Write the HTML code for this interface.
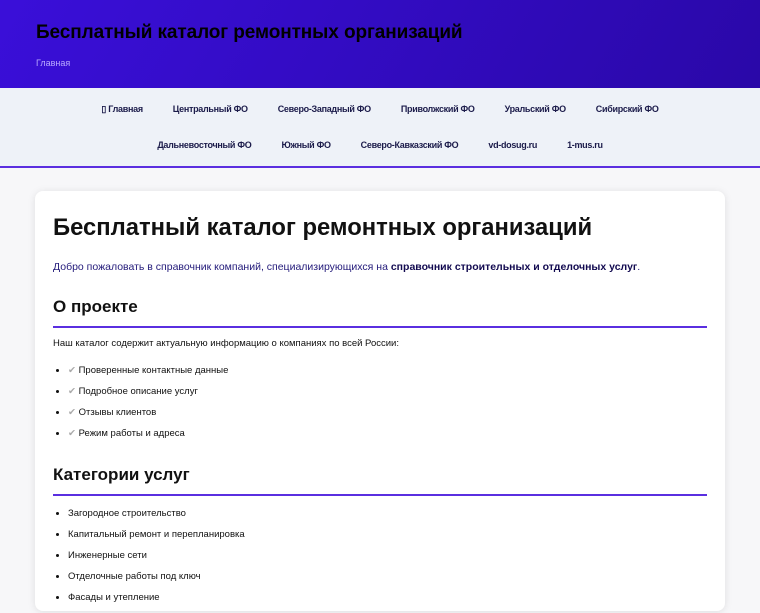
<!DOCTYPE html>
<html><head><meta charset="utf-8"><style>
body{margin:0;background:#f7f7f9;font-family:"Liberation Sans",sans-serif;color:#111}
.hd{height:88px;background:linear-gradient(120deg,#3a0fd9,#2a08a8);position:relative}
.hd h1{position:absolute;left:36px;top:22px;margin:0;font-size:19px;font-weight:bold;color:#000;letter-spacing:-0.1px}
.hd a{position:absolute;left:36px;top:58px;font-size:9px;color:#b9a8ff}
.nav{height:75px;padding-top:3px;background:#eef2f8;border-bottom:2px solid #5a2fe0;font-size:9px;font-weight:bold;color:#1b1b4a;letter-spacing:-0.3px}
.row{display:flex;justify-content:center;height:36px;align-items:center}
.row span{margin:0 15px}
.card{position:absolute;left:35px;top:191px;width:690px;height:420px;background:#fff;border-radius:8px;box-shadow:0 1px 8px rgba(0,0,0,.1)}
h1.t{font-size:23.8px;margin:0;position:absolute;left:18px;top:23px;font-weight:bold}
.p{position:absolute;left:18px;font-size:10.5px}
h2{position:absolute;left:18px;width:654px;margin:0;font-size:17px;border-bottom:2px solid #5a2fe0;padding-bottom:9px}
ul{position:absolute;left:18px;margin:0;padding-left:15px;font-size:9.5px;list-style:disc}
li{height:21px}
</style></head><body>
<div class="hd"><h1>Бесплатный каталог ремонтных организаций</h1><a>Главная</a></div>
<div class="nav"><div class="row"><span>▯ Главная</span><span>Центральный ФО</span><span>Северо-Западный ФО</span><span>Приволжский ФО</span><span>Уральский ФО</span><span>Сибирский ФО</span></div>
<div class="row"><span>Дальневосточный ФО</span><span>Южный ФО</span><span>Северо-Кавказский ФО</span><span>vd-dosug.ru</span><span>1-mus.ru</span></div></div>
<div class="card">
<h1 class="t">Бесплатный каталог ремонтных организаций</h1>
<div class="p" style="top:70px;color:#231a7a">Добро пожаловать в справочник компаний, специализирующихся на <b style="color:#120a50">справочник строительных и отделочных услуг</b>.</div>
<h2 style="top:106px">О проекте</h2>
<div class="p" style="top:147px;font-size:9.5px">Наш каталог содержит актуальную информацию о компаниях по всей России:</div>
<ul style="top:174px"><li><span style="color:#aaa">✔</span> Проверенные контактные данные</li><li><span style="color:#aaa">✔</span> Подробное описание услуг</li><li><span style="color:#aaa">✔</span> Отзывы клиентов</li><li><span style="color:#aaa">✔</span> Режим работы и адреса</li></ul>
<h2 style="top:274px">Категории услуг</h2>
<ul style="top:317px"><li>Загородное строительство</li><li>Капитальный ремонт и перепланировка</li><li>Инженерные сети</li><li>Отделочные работы под ключ</li><li>Фасады и утепление</li></ul>
</div>
</body></html>
